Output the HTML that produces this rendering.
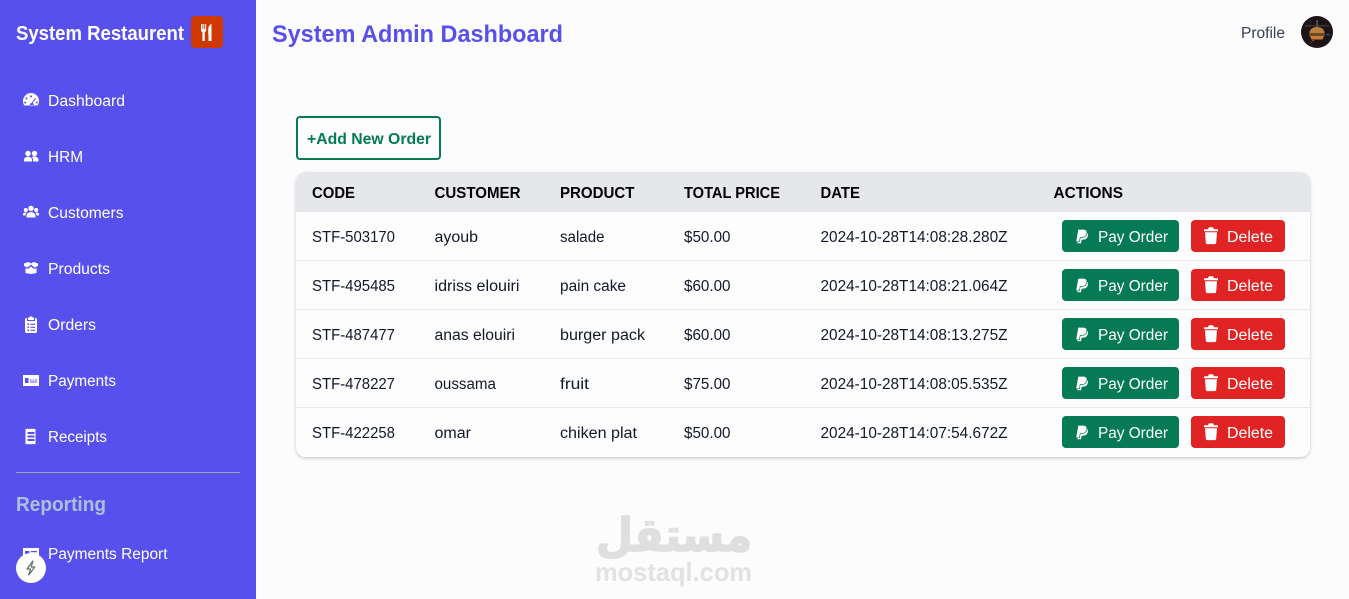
<!DOCTYPE html>
<html lang="en"><head><meta charset="utf-8"><title>System Admin Dashboard</title>
<style>
html,body{margin:0;padding:0;width:1349px;height:599px;overflow:hidden;background:#fcfcfc}
svg{display:block;position:absolute;left:0;top:0}
text{font-family:"Liberation Sans",sans-serif;font-size:15.5px;fill:#111827}
.n text{fill:#fff;font-size:15.5px}
.h text{font-weight:700;fill:#000;font-size:15.5px}
.b text{fill:#fff;font-size:15.5px}
</style></head><body>
<svg width="1349" height="599" viewBox="0 0 1349 599" xmlns="http://www.w3.org/2000/svg">
<defs>
<filter id="sh" x="-2%" y="-5%" width="104%" height="112%"><feDropShadow dx="0" dy="1.5" stdDeviation="1.800" flood-color="#000" flood-opacity=".2"/></filter>
<g id="pay"><rect x="0" y="0" width="117" height="32" rx="4" fill="#057a55"/>
<path d="M17 12h5.500c2.600 0 3.800 1.500 3.400 3.700-.5 2.500-2.200 3.900-4.800 3.900h-1.400l-.7 3.700H15.300z" fill="#fff"/>
<path d="M16 9.300h5.200c2.800 0 4.200 1.500 3.700 3.900-.5 2.700-2.400 4.300-5.200 4.300h-1.500l-.8 4.300H13.800z" fill="#fff" stroke="#057a55" stroke-width=".7"/>
</g>
<g id="del"><rect x="0" y="0" width="94" height="32" rx="4" fill="#e02424"/>
<path d="M13 9.300h4l.5-1.200c.2-.5.500-.8 1-.8h3c.5 0 .8.300 1 .8l.5 1.200h4v2H13zM14 12.300h12l-.8 10.400c-.1.800-.7 1.400-1.500 1.400h-7.400c-.8 0-1.400-.6-1.500-1.400z" fill="#fff"/>
</g>
</defs>

<!-- sidebar -->
<rect x="0" y="0" width="256" height="599" fill="#5850ec"/>
<text x="16" y="40" textLength="168" lengthAdjust="spacingAndGlyphs" style="font-size:20px;font-weight:700;fill:#fff">System Restaurent</text>
<rect x="191" y="16" width="32" height="32" rx="4" fill="#d03801"/>
<path d="M201 24v6c0 1 .6 1.800 1.400 2.100V41h2.400v-8.900c.8-.3 1.400-1.100 1.400-2.100v-6h-1v5h-.9v-5h-1v5h-.8v-5zM208.500 41h3V24c-2 .5-3.300 3-3.300 6v4h.3z" fill="#fff"/>

<g fill="#fff">
<!-- dashboard -->
<path fill-rule="evenodd" d="M31 93a8 8 0 0 0-8 8c0 1.500.4 3 1.200 4.200.2.300.5.300.7.300h12.200c.3 0 .6-.1.700-.3.800-1.200 1.200-2.700 1.200-4.200a8 8 0 0 0-8-8zM31 95.500a1 1 0 1 1 0 2 1 1 0 0 1 0-2zM26.500 97.500a1 1 0 1 1 0 2 1 1 0 0 1 0-2zM25.200 101.500a1 1 0 1 1 0 2 1 1 0 0 1 0-2zM36.800 101.500a1 1 0 1 1 0 2 1 1 0 0 1 0-2zM35.200 98l.9.500-3.300 4.500a1.800 1.800 0 1 1-1-.3z"/>
<!-- hrm -->
<circle cx="28" cy="153.500" r="2.700"/><circle cx="34.500" cy="153.500" r="2.700"/>
<path d="M24 161.500v-1.700c0-1.800 1.800-3 4-3s4 1.200 4 3v1.700zM33 161.500v-1.700c0-1.300-.5-2.200-1.300-2.900.9-.4 1.900-.4 2.800-.4 2 0 4 1.300 4 3.300v1.700z"/>
<!-- customers -->
<circle cx="31" cy="208.300" r="2.700"/><circle cx="25.800" cy="210" r="2"/><circle cx="36.200" cy="210" r="2"/>
<path d="M26.500 217.500v-1.800c0-2 2-3.600 4.500-3.600s4.500 1.600 4.500 3.600v1.800zM23 215.500v-1.300c0-1 .9-1.700 2.500-1.700.5 0 .9.100 1.200.2-.8.800-1.200 1.700-1.300 2.800zM39 215.500v-1.300c0-1-.9-1.700-2.500-1.700-.5 0-.9.100-1.200.2.800.8 1.200 1.700 1.300 2.800z"/>
<!-- products -->
<path d="M24 263.500l4.500-1.500 2.500 1.500 2.500-1.500 4.500 1.500v2.500l-3.500 1.500-3.500-3-3.500 3-3.500-1.500-.5-.5h.5zM25.500 268l2.500 1 3-2.500v7.500l-4.700-.8c-.5-.1-.8-.4-.8-.8zM36.500 268l-2.500 1-3-2.500v7.500l4.700-.8c.5-.1.800-.4.800-.8z"/>
<!-- orders -->
<path fill-rule="evenodd" d="M28 317.500h1.300a1.800 1.800 0 0 1 3.400 0H34v2.500h-6zM26.500 318h.5v3h8v-3h.5c.8 0 1.500.7 1.500 1.500V331.500c0 .8-.7 1.500-1.500 1.500h-9c-.8 0-1.500-.7-1.500-1.500V319.500c0-.8.7-1.500 1.500-1.500zM27.500 323.500V325H29v-1.500zM30.500 323.700v1.200h4.500v-1.200zM27.500 326.500V328H29v-1.500zM30.500 326.700v1.200h4.500v-1.200zM27.500 329.500V331H29v-1.500zM30.500 329.700v1.200h4.500v-1.200z"/>
<!-- payments -->
<path fill-rule="evenodd" d="M24 375h16v11H24zM26 378v5h3.500v-5zM31 379.500v1h1.500v-1zM33.500 379.500v1H35v-1zM36 379.500v1h2v-1zM31 381.500v1h7v-1z" transform="translate(-1,0)"/>
<!-- receipts -->
<path fill-rule="evenodd" d="M26 428.500l1 .7 1-.7 1 .7 1-.7 1 .7 1-.7 1 .7 1-.7 1 .7 1-.7v16l-1-.7-1 .7-1-.7-1 .7-1-.7-1 .7-1-.7-1 .7-1-.7-1 .7zM28 432v2h7v-2zM28 435.500v2h7v-2zM28 439v2h7v-2z" transform="translate(-.5,0)"/>
<!-- payments report -->
<path fill-rule="evenodd" d="M23 548h16v11H23zM25 551v5h4.500v-5zM31 551v1.300h6V551zM31 554.500v1.300h6v-1.300z"/>
</g>

<g class="n">
<text x="48" y="106" textLength="77" lengthAdjust="spacingAndGlyphs">Dashboard</text>
<text x="48" y="162" textLength="35" lengthAdjust="spacingAndGlyphs">HRM</text>
<text x="48" y="218" textLength="75.500" lengthAdjust="spacingAndGlyphs">Customers</text>
<text x="48" y="274" textLength="62" lengthAdjust="spacingAndGlyphs">Products</text>
<text x="48" y="330" textLength="48" lengthAdjust="spacingAndGlyphs">Orders</text>
<text x="48" y="386" textLength="68" lengthAdjust="spacingAndGlyphs">Payments</text>
<text x="48" y="442" textLength="59" lengthAdjust="spacingAndGlyphs">Receipts</text>
<text x="48" y="559" textLength="119.500" lengthAdjust="spacingAndGlyphs">Payments Report</text>
</g>
<rect x="16" y="472" width="224" height="1" fill="#9ca3af"/>
<text x="16" y="511" textLength="90" lengthAdjust="spacingAndGlyphs" style="font-size:20px;font-weight:700;fill:#aebfdd">Reporting</text>

<!-- badge -->
<circle cx="31" cy="568" r="15" fill="#fff"/>
<path d="M33 561l-6 8h3.500l-1.800 6 6-8h-3.500z" fill="none" stroke="#5f6f68" stroke-width="1.200" stroke-linejoin="round"/>

<!-- top -->
<text x="272" y="42" textLength="291" lengthAdjust="spacingAndGlyphs" style="font-size:24px;font-weight:700;fill:#5850ec">System Admin Dashboard</text>
<text x="1241" y="38" textLength="44" lengthAdjust="spacingAndGlyphs" style="fill:#374151">Profile</text>
<circle cx="1317" cy="32" r="16" fill="#1d1418"/>
<rect x="1305" y="25" width="24" height="1.500" fill="#3a3436"/>
<rect x="1316.500" y="20" width="1.200" height="8" fill="#7a6a4a"/>
<path d="M1309.500 33c0-4 3.500-6 7.500-6s7.500 2 7.500 6z" fill="#b5813f"/>
<rect x="1309" y="33" width="16" height="3" fill="#6b4a22"/>
<path d="M1310 36h14l-1.500 3.500h-11z" fill="#c08030"/>
<circle cx="1313" cy="40" r="1.300" fill="#a33"/><rect x="1326" y="34" width="4" height="1.500" fill="#2e4a7a"/>

<!-- add -->
<rect x="297" y="117" width="143" height="42" rx="3" fill="#fdfdfd" stroke="#057a55" stroke-width="2"/>
<text x="307" y="144" textLength="124" lengthAdjust="spacingAndGlyphs" style="font-weight:700;fill:#057a55">+Add New Order</text>

<!-- table -->
<rect x="296" y="172" width="1014" height="285" rx="10" fill="#fdfdfd" filter="url(#sh)"/>
<path d="M296 212v-30a10 10 0 0 1 10-10h994a10 10 0 0 1 10 10v30z" fill="#e5e7eb"/>
<g fill="#e8e9ec"><rect x="296" y="260" width="1014" height="1"/><rect x="296" y="309" width="1014" height="1"/><rect x="296" y="358" width="1014" height="1"/><rect x="296" y="407" width="1014" height="1"/></g>
<g class="h">
<text x="312" y="198" textLength="43" lengthAdjust="spacingAndGlyphs">CODE</text>
<text x="434.500" y="198" textLength="86" lengthAdjust="spacingAndGlyphs">CUSTOMER</text>
<text x="560" y="198" textLength="74.500" lengthAdjust="spacingAndGlyphs">PRODUCT</text>
<text x="684" y="198" textLength="96" lengthAdjust="spacingAndGlyphs">TOTAL PRICE</text>
<text x="820.500" y="198" textLength="39.500" lengthAdjust="spacingAndGlyphs">DATE</text>
<text x="1053.500" y="198" textLength="69.500" lengthAdjust="spacingAndGlyphs">ACTIONS</text>
</g>

<text x="312" y="242" textLength="83" lengthAdjust="spacingAndGlyphs">STF-503170</text>
<text x="434.500" y="242" textLength="43.500" lengthAdjust="spacingAndGlyphs">ayoub</text>
<text x="560" y="242" textLength="44.500" lengthAdjust="spacingAndGlyphs">salade</text>
<text x="684" y="242" textLength="46.500" lengthAdjust="spacingAndGlyphs">$50.00</text>
<text x="820.500" y="242" textLength="187" lengthAdjust="spacingAndGlyphs">2024-10-28T14:08:28.280Z</text>

<text x="312" y="291" textLength="83" lengthAdjust="spacingAndGlyphs">STF-495485</text>
<text x="434.500" y="291" textLength="85" lengthAdjust="spacingAndGlyphs">idriss elouiri</text>
<text x="560" y="291" textLength="66" lengthAdjust="spacingAndGlyphs">pain cake</text>
<text x="684" y="291" textLength="46.500" lengthAdjust="spacingAndGlyphs">$60.00</text>
<text x="820.500" y="291" textLength="187" lengthAdjust="spacingAndGlyphs">2024-10-28T14:08:21.064Z</text>

<text x="312" y="340" textLength="83" lengthAdjust="spacingAndGlyphs">STF-487477</text>
<text x="434.500" y="340" textLength="80.500" lengthAdjust="spacingAndGlyphs">anas elouiri</text>
<text x="560" y="340" textLength="85" lengthAdjust="spacingAndGlyphs">burger pack</text>
<text x="684" y="340" textLength="46.500" lengthAdjust="spacingAndGlyphs">$60.00</text>
<text x="820.500" y="340" textLength="187" lengthAdjust="spacingAndGlyphs">2024-10-28T14:08:13.275Z</text>

<text x="312" y="389" textLength="83" lengthAdjust="spacingAndGlyphs">STF-478227</text>
<text x="434.500" y="389" textLength="61.500" lengthAdjust="spacingAndGlyphs">oussama</text>
<text x="560" y="389" textLength="29" lengthAdjust="spacingAndGlyphs">fruit</text>
<text x="684" y="389" textLength="46.500" lengthAdjust="spacingAndGlyphs">$75.00</text>
<text x="820.500" y="389" textLength="187" lengthAdjust="spacingAndGlyphs">2024-10-28T14:08:05.535Z</text>

<text x="312" y="438" textLength="83" lengthAdjust="spacingAndGlyphs">STF-422258</text>
<text x="434.500" y="438" textLength="36.500" lengthAdjust="spacingAndGlyphs">omar</text>
<text x="560" y="438" textLength="77" lengthAdjust="spacingAndGlyphs">chiken plat</text>
<text x="684" y="438" textLength="46.500" lengthAdjust="spacingAndGlyphs">$50.00</text>
<text x="820.500" y="438" textLength="187" lengthAdjust="spacingAndGlyphs">2024-10-28T14:07:54.672Z</text>

<use href="#pay" x="1062" y="220"/><use href="#del" x="1191" y="220"/>
<use href="#pay" x="1062" y="269"/><use href="#del" x="1191" y="269"/>
<use href="#pay" x="1062" y="318"/><use href="#del" x="1191" y="318"/>
<use href="#pay" x="1062" y="367"/><use href="#del" x="1191" y="367"/>
<use href="#pay" x="1062" y="416"/><use href="#del" x="1191" y="416"/>
<g class="b">
<text x="1098" y="242" textLength="70" lengthAdjust="spacingAndGlyphs">Pay Order</text><text x="1227" y="242" textLength="46" lengthAdjust="spacingAndGlyphs">Delete</text>
<text x="1098" y="291" textLength="70" lengthAdjust="spacingAndGlyphs">Pay Order</text><text x="1227" y="291" textLength="46" lengthAdjust="spacingAndGlyphs">Delete</text>
<text x="1098" y="340" textLength="70" lengthAdjust="spacingAndGlyphs">Pay Order</text><text x="1227" y="340" textLength="46" lengthAdjust="spacingAndGlyphs">Delete</text>
<text x="1098" y="389" textLength="70" lengthAdjust="spacingAndGlyphs">Pay Order</text><text x="1227" y="389" textLength="46" lengthAdjust="spacingAndGlyphs">Delete</text>
<text x="1098" y="438" textLength="70" lengthAdjust="spacingAndGlyphs">Pay Order</text><text x="1227" y="438" textLength="46" lengthAdjust="spacingAndGlyphs">Delete</text>
</g>

<!-- watermark -->
<text x="752" y="551" textLength="156" lengthAdjust="spacingAndGlyphs" direction="rtl" style="font-family:'DejaVu Sans',sans-serif;font-size:46px;font-weight:700;fill:#dfdfdf;stroke:#dfdfdf;stroke-width:1.500">مستقل</text>
<text x="595" y="581" textLength="157" lengthAdjust="spacingAndGlyphs" style="font-size:26px;font-weight:700;fill:#e2e2e2">mostaql.com</text>
</svg>
</body></html>
